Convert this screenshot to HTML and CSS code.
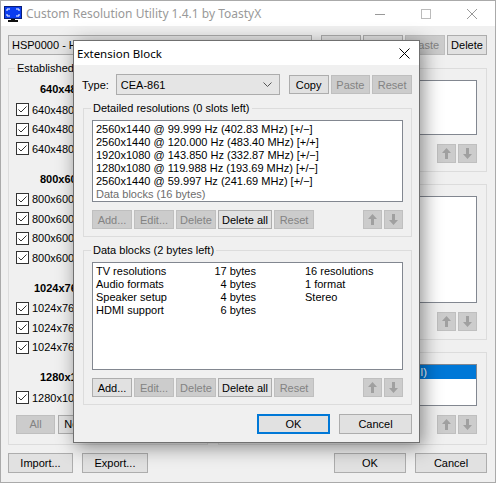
FILE: index.html
```html
<!DOCTYPE html>
<html>
<head>
<meta charset="utf-8">
<title>Custom Resolution Utility</title>
<link rel="stylesheet" href="styles.css">
</head>
<body>
<div class="window">
    <div class="titlebar">
        <svg class="appIcon" width="18" height="16" viewBox="0 0 18 16">
            <rect x="0.5" y="0.5" width="17" height="12" fill="#0a3cf0" stroke="#0a1f7a"/>
            <path d="M3 3h3M3 3v2M15 3h-3M15 3v2M3 10h3M3 10v-2M15 10h-3M15 10v-2" stroke="#fff" stroke-width="1" fill="none"/>
            <rect x="7" y="13" width="4" height="1" fill="#111"/>
            <rect x="4" y="14" width="10" height="2" fill="#111"/>
        </svg>
        <div class="titleText">Custom Resolution Utility 1.4.1 by ToastyX</div>
        <div class="winBtn">
            <svg width="10" height="10" viewBox="0 0 10 10"><path d="M0 5.5h10" stroke="#999" fill="none"/></svg>
        </div>
        <div class="winBtn">
            <svg width="10" height="10" viewBox="0 0 10 10"><rect x="0.5" y="0.5" width="9" height="9" stroke="#bbb" fill="none"/></svg>
        </div>
        <div class="winBtn">
            <svg width="10" height="10" viewBox="0 0 10 10"><path d="M0 0L10 10M10 0L0 10" stroke="#999" fill="none"/></svg>
        </div>
    </div>

    <div class="content">
        <div class="toolbar">
            <div class="combo monitorCombo">HSP0000 - HCP LP2475w (Active)</div>
            <button class="btn btnSmall">Edit...</button>
            <button class="btn btnSmall">Copy</button>
            <button class="btn btnSmall off">Paste</button>
            <button class="btn btnSmall">Delete</button>
        </div>

        <div class="main">
            <fieldset class="group timings">
                <legend>Established timings</legend>
                <div class="section">
                    <div class="resHeader">640x480</div>
                    <label class="check"><span class="box"><svg width="11" height="11" viewBox="0 0 11 11"><path d="M1.5 5.5L4 8L9.5 2.5" stroke="#333" fill="none"/></svg></span>640x480 @ 60 Hz</label>
                    <label class="check"><span class="box"><svg width="11" height="11" viewBox="0 0 11 11"><path d="M1.5 5.5L4 8L9.5 2.5" stroke="#333" fill="none"/></svg></span>640x480 @ 72 Hz</label>
                    <label class="check"><span class="box"><svg width="11" height="11" viewBox="0 0 11 11"><path d="M1.5 5.5L4 8L9.5 2.5" stroke="#333" fill="none"/></svg></span>640x480 @ 75 Hz</label>
                </div>
                <div class="section">
                    <div class="resHeader">800x600</div>
                    <label class="check"><span class="box"><svg width="11" height="11" viewBox="0 0 11 11"><path d="M1.5 5.5L4 8L9.5 2.5" stroke="#333" fill="none"/></svg></span>800x600 @ 56 Hz</label>
                    <label class="check"><span class="box"><svg width="11" height="11" viewBox="0 0 11 11"><path d="M1.5 5.5L4 8L9.5 2.5" stroke="#333" fill="none"/></svg></span>800x600 @ 60 Hz</label>
                    <label class="check"><span class="box"><svg width="11" height="11" viewBox="0 0 11 11"><path d="M1.5 5.5L4 8L9.5 2.5" stroke="#333" fill="none"/></svg></span>800x600 @ 72 Hz</label>
                    <label class="check"><span class="box"><svg width="11" height="11" viewBox="0 0 11 11"><path d="M1.5 5.5L4 8L9.5 2.5" stroke="#333" fill="none"/></svg></span>800x600 @ 75 Hz</label>
                </div>
                <div class="section">
                    <div class="resHeader wide">1024x768</div>
                    <label class="check"><span class="box"><svg width="11" height="11" viewBox="0 0 11 11"><path d="M1.5 5.5L4 8L9.5 2.5" stroke="#333" fill="none"/></svg></span>1024x768 @ 60 Hz</label>
                    <label class="check"><span class="box"><svg width="11" height="11" viewBox="0 0 11 11"><path d="M1.5 5.5L4 8L9.5 2.5" stroke="#333" fill="none"/></svg></span>1024x768 @ 70 Hz</label>
                    <label class="check"><span class="box"><svg width="11" height="11" viewBox="0 0 11 11"><path d="M1.5 5.5L4 8L9.5 2.5" stroke="#333" fill="none"/></svg></span>1024x768 @ 75 Hz</label>
                </div>
                <div class="section">
                    <div class="resHeader">1280x1024</div>
                    <label class="check"><span class="box"><svg width="11" height="11" viewBox="0 0 11 11"><path d="M1.5 5.5L4 8L9.5 2.5" stroke="#333" fill="none"/></svg></span>1280x1024 @ 75 Hz</label>
                </div>
                <div class="pairBtns">
                    <button class="btn btnSmall off">All</button>
                    <button class="btn btnSmall">None</button>
                </div>
            </fieldset>

            <div class="rightCol">
                <fieldset class="group">
                    <legend>Standard resolutions</legend>
                    <div class="listbox listShort"></div>
                    <div class="arrowRow">
                        <button class="btn arrowBtn off"><svg width="9" height="11" viewBox="0 0 9 11"><path d="M4.5 0L9 5H6V11H3V5H0Z" fill="#a0a0a0"/></svg></button>
                        <button class="btn arrowBtn off"><svg width="9" height="11" viewBox="0 0 9 11"><path d="M4.5 11L9 6H6V0H3V6H0Z" fill="#a0a0a0"/></svg></button>
                    </div>
                </fieldset>
                <fieldset class="group">
                    <legend>Detailed resolutions</legend>
                    <div class="listbox listTall"></div>
                    <div class="arrowRow">
                        <button class="btn arrowBtn off"><svg width="9" height="11" viewBox="0 0 9 11"><path d="M4.5 0L9 5H6V11H3V5H0Z" fill="#a0a0a0"/></svg></button>
                        <button class="btn arrowBtn off"><svg width="9" height="11" viewBox="0 0 9 11"><path d="M4.5 11L9 6H6V0H3V6H0Z" fill="#a0a0a0"/></svg></button>
                    </div>
                </fieldset>
                <fieldset class="group">
                    <legend>Extension blocks</legend>
                    <div class="listbox listSmall">
                        <div class="selected">CEA-861 (HDMI)</div>
                    </div>
                    <div class="arrowRow">
                        <button class="btn arrowBtn off"><svg width="9" height="11" viewBox="0 0 9 11"><path d="M4.5 0L9 5H6V11H3V5H0Z" fill="#a0a0a0"/></svg></button>
                        <button class="btn arrowBtn off"><svg width="9" height="11" viewBox="0 0 9 11"><path d="M4.5 11L9 6H6V0H3V6H0Z" fill="#a0a0a0"/></svg></button>
                    </div>
                </fieldset>
            </div>
        </div>

        <div class="bottomBar">
            <button class="btn btnWide">Import...</button>
            <button class="btn btnWide">Export...</button>
            <div class="spacer"></div>
            <button class="btn btnWide">OK</button>
            <button class="btn btnWide">Cancel</button>
        </div>
    </div>

    <!-- extension block editor, opened over the main window -->
    <div class="dialog">
        <div class="dlgTitle">
            <div class="dlgTitleText">Extension Block</div>
            <svg class="dlgClose" width="11" height="11" viewBox="0 0 11 11"><path d="M0.5 0.5L10.5 10.5M10.5 0.5L0.5 10.5" stroke="#000" fill="none"/></svg>
        </div>
        <div class="dlgBody">
            <div class="typeRow">
                <span class="typeLabel">Type:</span>
                <div class="combo typeCombo">
                    <span>CEA-861</span>
                    <svg width="9" height="5" viewBox="0 0 9 5"><path d="M0.5 0.5L4.5 4.5L8.5 0.5" stroke="#555" fill="none"/></svg>
                </div>
                <button class="btn btnSmall">Copy</button>
                <button class="btn btnSmall off">Paste</button>
                <button class="btn btnSmall off">Reset</button>
            </div>

            <fieldset class="group dlgGroup">
                <legend>Detailed resolutions (0 slots left)</legend>
                <div class="listbox listDetail">
                    <div>2560x1440 @ 99.999 Hz (402.83 MHz) [+/−]</div>
                    <div>2560x1440 @ 120.000 Hz (483.40 MHz) [+/+]</div>
                    <div>1920x1080 @ 143.850 Hz (332.87 MHz) [+/−]</div>
                    <div>1280x1080 @ 119.988 Hz (193.69 MHz) [+/−]</div>
                    <div>2560x1440 @ 59.997 Hz (241.69 MHz) [+/−]</div>
                    <div class="muted">Data blocks (16 bytes)</div>
                </div>
                <div class="editRow">
                    <button class="btn btnEdit off">Add...</button>
                    <button class="btn btnEdit off">Edit...</button>
                    <button class="btn btnEdit off">Delete</button>
                    <button class="btn btnDelAll">Delete all</button>
                    <button class="btn btnEdit off">Reset</button>
                    <div class="spacer"></div>
                    <button class="btn arrowBtn off"><svg width="9" height="11" viewBox="0 0 9 11"><path d="M4.5 0L9 5H6V11H3V5H0Z" fill="#a0a0a0"/></svg></button>
                    <button class="btn arrowBtn off"><svg width="9" height="11" viewBox="0 0 9 11"><path d="M4.5 11L9 6H6V0H3V6H0Z" fill="#a0a0a0"/></svg></button>
                </div>
            </fieldset>

            <fieldset class="group dlgGroup">
                <legend>Data blocks (2 bytes left)</legend>
                <div class="listbox listBlocks">
                    <div class="blockRow"><span>TV resolutions</span><span class="bytes">17 bytes</span><span class="desc">16 resolutions</span></div>
                    <div class="blockRow"><span>Audio formats</span><span class="bytes">4 bytes</span><span class="desc">1 format</span></div>
                    <div class="blockRow"><span>Speaker setup</span><span class="bytes">4 bytes</span><span class="desc">Stereo</span></div>
                    <div class="blockRow"><span>HDMI support</span><span class="bytes">6 bytes</span><span class="desc"></span></div>
                </div>
                <div class="editRow">
                    <button class="btn btnEdit">Add...</button>
                    <button class="btn btnEdit off">Edit...</button>
                    <button class="btn btnEdit off">Delete</button>
                    <button class="btn btnDelAll">Delete all</button>
                    <button class="btn btnEdit off">Reset</button>
                    <div class="spacer"></div>
                    <button class="btn arrowBtn off"><svg width="9" height="11" viewBox="0 0 9 11"><path d="M4.5 0L9 5H6V11H3V5H0Z" fill="#a0a0a0"/></svg></button>
                    <button class="btn arrowBtn off"><svg width="9" height="11" viewBox="0 0 9 11"><path d="M4.5 11L9 6H6V0H3V6H0Z" fill="#a0a0a0"/></svg></button>
                </div>
            </fieldset>

            <div class="dlgButtons">
                <button class="btn btnDlg default">OK</button>
                <button class="btn btnDlg">Cancel</button>
            </div>
        </div>
    </div>
</div>
</body>
</html>
```

FILE: styles.css
```css
* {
    box-sizing: border-box;
}
body {
    margin: 0;
    font-family: "Liberation Sans", Arial, sans-serif;
    font-size: 11px;
    color: #000;
    background: #fff;
}
button {
    font: inherit;
    color: inherit;
}

/* main window */
.window {
    position: relative;
    width: 496px;
    height: 483px;
    border: 1px solid #aaaaaa;
    background: #f0f0f0;
    display: flex;
    flex-direction: column;
    overflow: hidden;
}
.titlebar {
    height: 25px;
    background: #fff;
    display: flex;
    align-items: center;
}
.appIcon {
    margin: 0 4px 0 3px;
}
.titleText {
    flex: 1;
    color: #999;
    font-family: "Noto Sans", sans-serif;
    font-size: 12px;
}
.winBtn {
    width: 46px;
    height: 25px;
    display: flex;
    align-items: center;
    justify-content: center;
}
.content {
    flex: 1;
    display: flex;
    flex-direction: column;
    padding: 9px 8px 9px 7px;
    min-height: 0;
}
.toolbar {
    display: flex;
    height: 20px;
    gap: 2px;
}
.combo {
    border: 1px solid #acacac;
    background: #e5e5e5;
    display: flex;
    align-items: center;
    padding: 0 3px;
}
.monitorCombo {
    flex: 1;
    margin-right: 7px;
}

/* buttons */
.btn {
    border: 1px solid #adadad;
    background: #e1e1e1;
    padding: 0;
    height: 19px;
    display: flex;
    align-items: center;
    justify-content: center;
    white-space: nowrap;
}
.btn.off {
    background: #cccccc;
    border-color: #bfbfbf;
    color: #838383;
}
.btnSmall {
    width: 40px;
}
.toolbar .btn {
    height: 20px;
}
.btnWide {
    width: 66px;
    height: 20px;
}
.arrowBtn {
    width: 19px;
}
.spacer {
    flex: 1;
}

/* group boxes */
.group {
    margin: 0;
    min-width: 0;
    border: 1px solid #dcdcdc;
    padding: 4px 9px 8px;
}
.group legend {
    padding: 0 2px;
    margin-left: -1px;
    line-height: 16px;
}
.listbox {
    background: #fff;
    border: 1px solid #828790;
    padding: 2px 3px;
    line-height: 13px;
    white-space: nowrap;
    overflow: hidden;
}

.main {
    flex: 1;
    margin-top: 5px;
    display: flex;
    gap: 10px;
    min-height: 0;
}
.timings {
    width: 200px;
    padding: 3px 7px 0;
}
.section {
    margin-bottom: 10px;
}
.resHeader {
    font-weight: bold;
    height: 21px;
    line-height: 21px;
    padding-left: 24px;
}
.resHeader.wide {
    padding-left: 18px;
}
.check {
    display: flex;
    align-items: center;
    height: 19.5px;
    gap: 3px;
}
.box {
    width: 13px;
    height: 13px;
    border: 1px solid #333;
    background: #fff;
    display: flex;
}
.pairBtns {
    display: flex;
    gap: 3px;
    margin-top: -3px;
}
.pairBtns .btn {
    width: 39px;
}

.rightCol {
    flex: 1;
    display: flex;
    flex-direction: column;
    gap: 4px;
}
.rightCol .group:last-child {
    flex: 1;
}
.listShort {
    height: 55px;
}
.listTall {
    height: 107px;
}
.listSmall {
    height: 42px;
    padding: 0;
}
.selected {
    background: #0078d7;
    color: #fff;
    text-align: right;
    padding-right: 49px;
    line-height: 14px;
}
.arrowRow {
    display: flex;
    justify-content: flex-end;
    gap: 2px;
    margin-top: 9px;
}

.bottomBar {
    display: flex;
    gap: 9px;
    margin-top: 8px;
    height: 20px;
}
.bottomBar .btn:nth-child(1) {
    width: 65px;
}
.bottomBar .btn:nth-child(4),
.bottomBar .btn:nth-child(5) {
    width: 72px;
}

/* extension block dialog */
.dialog {
    position: absolute;
    left: 72px;
    top: 39px;
    width: 347px;
    height: 403px;
    border: 1px solid #707070;
    background: #f0f0f0;
    box-shadow: 3px 4px 18px rgba(0, 0, 0, 0.45);
    display: flex;
    flex-direction: column;
}
.dlgTitle {
    height: 24px;
    background: #fff;
    display: flex;
    align-items: center;
    padding-left: 3px;
    font-family: "Noto Sans", sans-serif;
    font-size: 11.5px;
}
.dlgTitleText {
    flex: 1;
}
.dlgClose {
    margin-right: 9px;
}
.dlgBody {
    flex: 1;
    padding: 9px 7px 8px 8px;
    display: flex;
    flex-direction: column;
}
.typeRow {
    display: flex;
    align-items: center;
    gap: 2px;
    height: 21px;
}
.typeLabel {
    width: 32px;
}
.typeCombo {
    width: 165px;
    height: 21px;
    justify-content: space-between;
    padding: 0 7px 0 4px;
    margin-right: 7px;
}
.dlgGroup {
    margin: 5px 0 0 1px;
    padding: 4px 8px 7px;
}
.listDetail {
    height: 82px;
}
.listBlocks {
    height: 108px;
}
.muted {
    color: #6d6d6d;
}
.blockRow {
    display: grid;
    grid-template-columns: 105px 55px 1fr;
}
.bytes {
    text-align: right;
}
.desc {
    padding-left: 49px;
}
.editRow {
    display: flex;
    gap: 2px;
    margin-top: 8px;
}
.btnEdit {
    width: 40px;
}
.btnDelAll {
    width: 54px;
}
.dlgButtons {
    display: flex;
    justify-content: flex-end;
    gap: 9px;
    margin-top: auto;
}
.btnDlg {
    width: 73px;
    height: 20px;
}
.btnDlg.default {
    border: 2px solid #0078d7;
}
```
